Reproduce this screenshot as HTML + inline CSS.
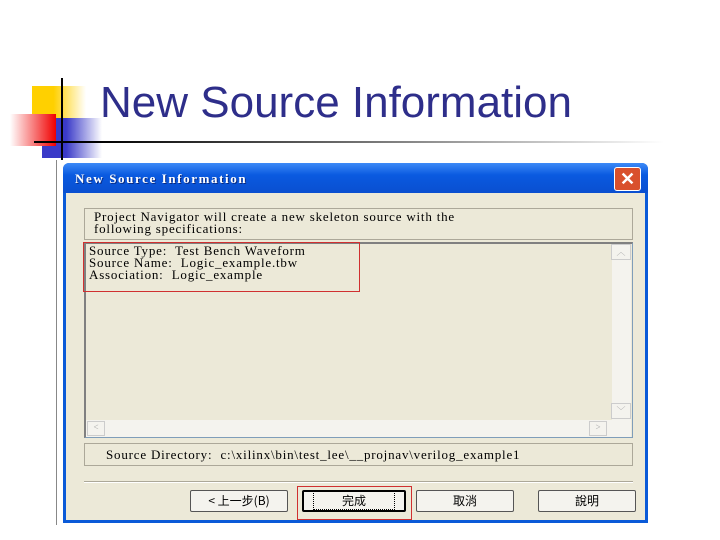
<!DOCTYPE html>
<html><head><meta charset="utf-8"><style>
body{margin:0;width:720px;height:540px;background:#fff;position:relative;overflow:hidden;font-family:"Liberation Serif","Noto Serif CJK SC",serif}
.a{position:absolute}
.t{font-family:"Liberation Serif",serif;font-size:13px;letter-spacing:0.8px;color:#000;line-height:12px;white-space:nowrap}
.btn{position:absolute;top:490px;height:22px;background:#f4f3ee;border:1px solid #555;border-radius:2px;box-sizing:border-box;font-family:"Noto Sans CJK TC",sans-serif;font-size:12px;text-align:center;line-height:20px}
</style></head><body>
<div class="a" style="left:32px;top:86px;width:54px;height:48px;background:linear-gradient(90deg,#ffd000 40%,#fff)"></div>
<div class="a" style="left:42px;top:118px;width:60px;height:40px;background:linear-gradient(90deg,#3a3ac8 40%,#fff)"></div>
<div class="a" style="left:10px;top:114px;width:46px;height:32px;background:linear-gradient(270deg,#f00000,#fff)"></div>
<div class="a" style="left:61px;top:78px;width:2px;height:82px;background:#000"></div>
<div class="a" style="left:34px;top:141px;width:630px;height:2px;background:linear-gradient(90deg,#000 10%,#888 60%,#fff)"></div>
<div class="a" style="left:100px;top:78px;font-family:'Liberation Sans',sans-serif;font-size:44px;color:#2e2e8a">New Source Information</div>
<div class="a" style="left:56px;top:160px;width:8px;height:365px;background:#fff;border-left:1px solid #888"></div>
<div class="a" style="left:63px;top:163px;width:585px;height:360px;background:#0a5ad8;border-radius:6px 6px 0 0"></div>
<div class="a" style="left:63px;top:163px;width:585px;height:30px;background:linear-gradient(#3d8af7,#0a5ae0 40%,#0a4fd0);border-radius:6px 6px 0 0"></div>
<div class="a" style="left:75px;top:171px;color:#fff;font-weight:bold;font-size:13px;letter-spacing:1.6px;font-family:'Liberation Serif',serif;text-shadow:1px 1px #0a2a80">New Source Information</div>
<div class="a" style="left:614px;top:167px;width:25px;height:22px;background:#d9502c;border:1px solid #fff;border-radius:3px;color:#fff;font:bold 18px 'Liberation Sans';text-align:center;line-height:22px">✕</div>
<div class="a" style="left:66px;top:193px;width:579px;height:327px;background:#ece9d8"></div>
<div class="a" style="left:84px;top:208px;width:549px;height:32px;border:1px solid #aca899;box-sizing:border-box"></div>
<div class="a t" style="left:94px;top:211px">Project Navigator will create a new skeleton source with the<br>following specifications:</div>
<div class="a" style="left:84px;top:242px;width:549px;height:196px;border:1px solid #7f9db9;border-top:2px solid #808080;border-left:2px solid #808080;box-sizing:border-box"></div>
<div class="a" style="left:612px;top:244px;width:19px;height:176px;background:#f4f3ee"></div>
<div class="a" style="left:86px;top:420px;width:545px;height:17px;background:#f4f3ee"></div>
<div class="a" style="left:611px;top:244px;width:20px;height:16px;border:1px solid #ccc;box-sizing:border-box;font-size:9px;color:#aaa;text-align:center">︿</div>
<div class="a" style="left:611px;top:403px;width:20px;height:16px;border:1px solid #ccc;box-sizing:border-box;font-size:9px;color:#aaa;text-align:center">﹀</div>
<div class="a" style="left:87px;top:421px;width:18px;height:15px;border:1px solid #ccc;box-sizing:border-box;font-size:9px;color:#aaa;text-align:center">&lt;</div>
<div class="a" style="left:589px;top:421px;width:18px;height:15px;border:1px solid #ccc;box-sizing:border-box;font-size:9px;color:#aaa;text-align:center">&gt;</div>
<div class="a t" style="left:89px;top:245px">Source Type:&nbsp; Test Bench Waveform<br>Source Name:&nbsp; Logic_example.tbw<br>Association:&nbsp; Logic_example</div>
<div class="a" style="left:83px;top:242px;width:277px;height:50px;border:1px solid #d03030;box-sizing:border-box;z-index:5"></div>
<div class="a" style="left:84px;top:443px;width:549px;height:23px;border:1px solid #aca899;box-sizing:border-box"></div>
<div class="a t" style="left:106px;top:449px">Source Directory:&nbsp; c:\xilinx\bin\test_lee\__projnav\verilog_example1</div>
<div class="a" style="left:84px;top:481px;width:549px;height:1px;background:#aca899;border-bottom:1px solid #fff"></div>
<div class="btn" style="left:190px;width:98px">&lt; 上一步(B)</div>
<div class="btn" style="left:302px;width:104px;border:2px solid #000;line-height:18px"><span style="border:1px dotted #000;padding:0 28px">完成</span></div>
<div class="btn" style="left:416px;width:98px">取消</div>
<div class="btn" style="left:538px;width:98px">說明</div>
<div class="a" style="left:297px;top:486px;width:115px;height:34px;border:1px solid #d03030;box-sizing:border-box;z-index:5"></div>
</body></html>
